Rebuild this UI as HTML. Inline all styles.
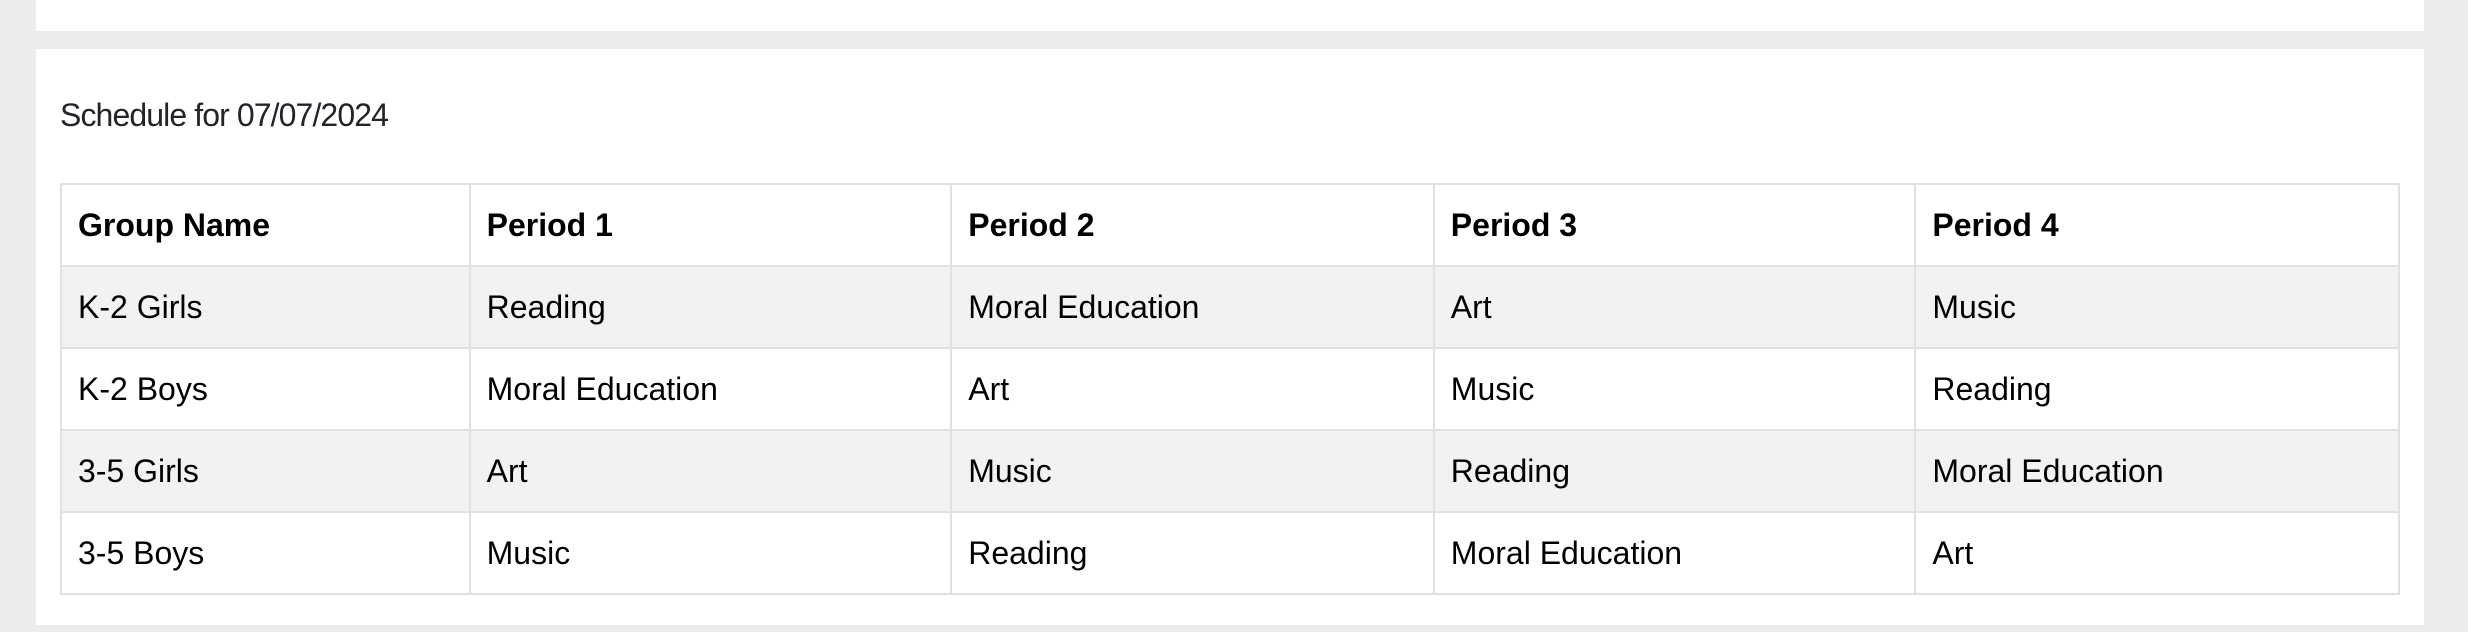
<!DOCTYPE html>
<html><head><style>
html,body{margin:0;padding:0;}
body{width:2468px;height:632px;background:#ebecee;position:relative;overflow:hidden;font-family:"Liberation Sans",Arial,sans-serif;}
.p1{position:absolute;left:36px;top:0;width:2388px;height:31px;background:#fff;}
.p2{position:absolute;left:36px;top:49px;width:2388px;height:576px;background:#fff;}
.title{position:absolute;left:24px;top:48px;font-size:32px;color:#212529;letter-spacing:-0.9px;}
table{position:absolute;left:24px;top:134px;width:2340px;border-collapse:collapse;font-size:32px;color:#000;}
td,th{border:2px solid #dee2e6;height:80px;padding:0 0 0 16px;text-align:left;vertical-align:middle;box-sizing:border-box;}
th{font-weight:bold;}
tr.s td{background:#f2f2f2;}
</style></head><body>
<div class="p1"></div>
<div class="p2">
<div class="title">Schedule for 07/07/2024</div>
<table>
<colgroup><col style="width:409px"><col style="width:482px"><col style="width:483px"><col style="width:482px"><col style="width:484px"></colgroup>
<tr><th style="height:82px">Group Name</th><th>Period 1</th><th>Period 2</th><th>Period 3</th><th>Period 4</th></tr>
<tr class="s"><td style="height:82px">K-2 Girls</td><td>Reading</td><td>Moral Education</td><td>Art</td><td>Music</td></tr>
<tr><td style="height:82px">K-2 Boys</td><td>Moral Education</td><td>Art</td><td>Music</td><td>Reading</td></tr>
<tr class="s"><td style="height:82px">3-5 Girls</td><td>Art</td><td>Music</td><td>Reading</td><td>Moral Education</td></tr>
<tr><td style="height:82px">3-5 Boys</td><td>Music</td><td>Reading</td><td>Moral Education</td><td>Art</td></tr>
</table>
</div>
</body></html>
